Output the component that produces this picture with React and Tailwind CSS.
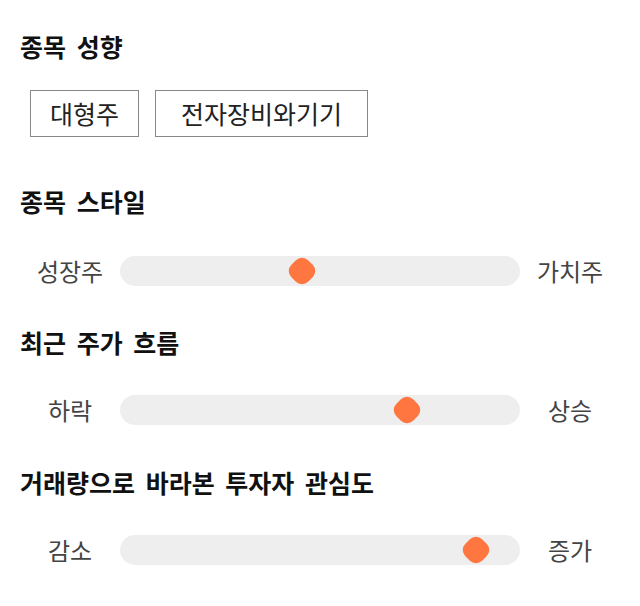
import React from "react";

const font = { fontFamily: '"Noto Sans CJK KR", "Noto Sans", sans-serif' };

function Title({ children, className = "" }) {
  return (
    <h2 className={`text-[25px] leading-[32px] font-bold text-[#111] [word-spacing:5px] ${className}`}>
      {children}
    </h2>
  );
}

function Slider({ left, right, thumb, className = "" }) {
  return (
    <div className={`flex items-center h-[30px] ${className}`}>
      <div className="w-[100px] text-center text-[24px] leading-[30px] text-[#444]">{left}</div>
      <div className="relative flex-1 h-[30px] rounded-full bg-[#eeeeee]">
        <div
          className="absolute top-[1px] w-[28px] h-[28px] flex items-center justify-center"
          style={{ left: thumb }}
        >
          <div className="w-[24px] h-[24px] rotate-45 rounded-[9px] bg-[#ff7640]" />
        </div>
      </div>
      <div className="w-[100px] text-center text-[24px] leading-[30px] text-[#444]">{right}</div>
    </div>
  );
}

export default function App() {
  return (
    <div className="w-[640px] h-[606px] bg-white px-5 pt-[30px]" style={font}>
      <Title>종목 성향</Title>
      <div className="flex gap-4 ml-[10px] mt-[28px]">
        <div className="w-[109px] h-[47px] border border-[#888] flex items-center justify-center text-[25px] text-[#222]">
          대형주
        </div>
        <div className="w-[213px] h-[47px] border border-[#888] flex items-center justify-center text-[25px] text-[#222]">
          전자장비와기기
        </div>
      </div>
      <Title className="mt-[48px]">종목 스타일</Title>
      <Slider className="mt-[39px]" left="성장주" right="가치주" thumb={168} />
      <Title className="mt-[40px]">최근 주가 흐름</Title>
      <Slider className="mt-[37px]" left="하락" right="상승" thumb={273} />
      <Title className="mt-[41px]">거래량으로 바라본 투자자 관심도</Title>
      <Slider className="mt-[37px]" left="감소" right="증가" thumb={342} />
    </div>
  );
}
